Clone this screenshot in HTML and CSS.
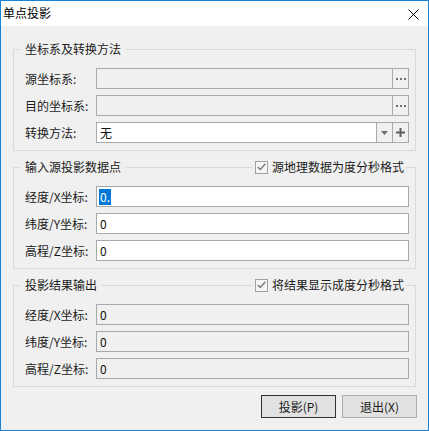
FILE: index.html
```html
<!doctype html>
<html lang="zh-CN">
<head>
  <meta charset="utf-8" />
  <title>单点投影</title>
  <link rel="stylesheet" href="styles.css">
</head>
<body>

<div class="window">
  <div class="titlebar">
    <span class="title">单点投影</span>
    <svg class="close" width="11" height="11" viewBox="0 0 11 11">
      <path d="M0.5 0.5 L10.5 10.5 M10.5 0.5 L0.5 10.5" stroke="#000" stroke-width="1" fill="none" />
    </svg>
  </div>

  <div class="content">

    <section class="group">
      <fieldset>
        <legend>坐标系及转换方法</legend>
        <div class="row">
          <span class="label">源坐标系:</span>
          <span class="combo">
            <span class="field readonly"></span>
            <span class="btn">
              <svg width="10" height="2" viewBox="0 0 10 2"><path d="M0 0 H2 V2 H0 Z M4 0 H6 V2 H4 Z M8 0 H10 V2 H8 Z" fill="#707070" /></svg>
            </span>
          </span>
        </div>
        <div class="row">
          <span class="label">目的坐标系:</span>
          <span class="combo">
            <span class="field readonly"></span>
            <span class="btn">
              <svg width="10" height="2" viewBox="0 0 10 2"><path d="M0 0 H2 V2 H0 Z M4 0 H6 V2 H4 Z M8 0 H10 V2 H8 Z" fill="#707070" /></svg>
            </span>
          </span>
        </div>
        <div class="row">
          <span class="label">转换方法:</span>
          <span class="combo">
            <span class="field">无</span>
            <span class="btn">
              <svg width="7" height="4" viewBox="0 0 7 4"><path d="M0 0 H7 L3.5 4 Z" fill="#6d6d6d" /></svg>
            </span>
            <span class="btn">
              <svg width="9" height="9" viewBox="0 0 9 9"><path d="M0 3.5 H9 V5.5 H0 Z M3.5 0 H5.5 V9 H3.5 Z" fill="#5f5f5f" /></svg>
            </span>
          </span>
        </div>
      </fieldset>
    </section>

    <section class="group">
      <fieldset>
        <legend>输入源投影数据点</legend>
        <div class="row">
          <span class="label">经度/X坐标:</span>
          <span class="field"><span class="selected">0.</span></span>
        </div>
        <div class="row">
          <span class="label">纬度/Y坐标:</span>
          <span class="field">0</span>
        </div>
        <div class="row">
          <span class="label">高程/Z坐标:</span>
          <span class="field">0</span>
        </div>
      </fieldset>
      <label class="check">
        <span class="box">
          <svg width="9" height="8" viewBox="0 0 9 8"><path d="M0.8 4 L3.3 6.5 L8.3 0.8" stroke="#777" stroke-width="1.3" fill="none" /></svg>
        </span>
        源地理数据为度分秒格式
      </label>
    </section>

    <section class="group">
      <fieldset>
        <legend>投影结果输出</legend>
        <div class="row">
          <span class="label">经度/X坐标:</span>
          <span class="field readonly">0</span>
        </div>
        <div class="row">
          <span class="label">纬度/Y坐标:</span>
          <span class="field readonly">0</span>
        </div>
        <div class="row">
          <span class="label">高程/Z坐标:</span>
          <span class="field readonly">0</span>
        </div>
      </fieldset>
      <label class="check">
        <span class="box">
          <svg width="9" height="8" viewBox="0 0 9 8"><path d="M0.8 4 L3.3 6.5 L8.3 0.8" stroke="#777" stroke-width="1.3" fill="none" /></svg>
        </span>
        将结果显示成度分秒格式
      </label>
    </section>

    <div class="actions">
      <button class="default">投影(P)</button>
      <button>退出(X)</button>
    </div>

  </div>
</div>

</body>
</html>
```

FILE: styles.css
```css
body {
  margin: 0;
  font-family: "Noto Sans CJK SC", "Noto Sans", sans-serif;
  font-size: 12px;
  color: #1a1a1a;
  background-color: #f0f0f0;
}
.window {
  width: 429px;
  height: 431px;
  box-sizing: border-box;
  border: 1px solid #1883d7;
  background-color: #f0f0f0;
  display: flex;
  flex-direction: column;
}
.titlebar {
  height: 25px;
  background-color: #fff;
  display: flex;
  align-items: center;
  justify-content: space-between;
  padding: 0 9px 0 2px;
}
.title {
  line-height: 16px;
  color: #000;
  margin-top: -1px;
}
.close {
  margin-top: 1px;
}
.content {
  padding: 15px 12px 0;
}
.group {
  position: relative;
  margin-bottom: 8px;
}
fieldset {
  margin: 0;
  padding: 11px 6px 7px 11px;
  border: 1px solid #d9d9d9;
  min-width: 0;
}
legend {
  padding: 0 5px;
  margin-left: -5px;
  line-height: 16px;
}
.row {
  display: grid;
  grid-template-columns: 71px 1fr;
  align-items: center;
  height: 21px;
}
.row + .row {
  margin-top: 6px;
}
.label {
  white-space: nowrap;
  line-height: 16px;
}
.combo {
  display: flex;
  height: 21px;
}
.field {
  flex: 1;
  display: flex;
  align-items: center;
  height: 21px;
  box-sizing: border-box;
  border: 1px solid #a9a9a9;
  background-color: #fff;
  padding: 0 3px;
  line-height: 16px;
  color: #111;
}
.field.readonly {
  background-color: #f0f0f0;
}
.btn {
  width: 17px;
  height: 21px;
  box-sizing: border-box;
  border: 1px solid #a9a9a9;
  margin-left: -1px;
  background-color: #f0f0f0;
  display: flex;
  align-items: center;
  justify-content: center;
}
.selected {
  background-color: #0078d7;
  color: #fff;
  padding: 0 1px;
  margin-left: -1px;
}
.check {
  position: absolute;
  top: 0;
  left: 240px;
  display: flex;
  align-items: center;
  gap: 4px;
  padding: 0 2px;
  line-height: 16px;
  background-color: #f0f0f0;
}
.box {
  width: 13px;
  height: 13px;
  box-sizing: border-box;
  border: 1px solid #a0a0a0;
  background-color: #f5f5f5;
  display: flex;
  align-items: center;
  justify-content: center;
}
.actions {
  display: flex;
  justify-content: flex-end;
  gap: 6px;
  margin-right: -1px;
}
button {
  width: 75px;
  height: 23px;
  box-sizing: border-box;
  border: 1px solid #adadad;
  background-color: #e1e1e1;
  font-family: inherit;
  font-size: 12px;
  color: #1a1a1a;
  padding: 0;
  line-height: 16px;
}
button.default {
  border-color: #333;
}
```
